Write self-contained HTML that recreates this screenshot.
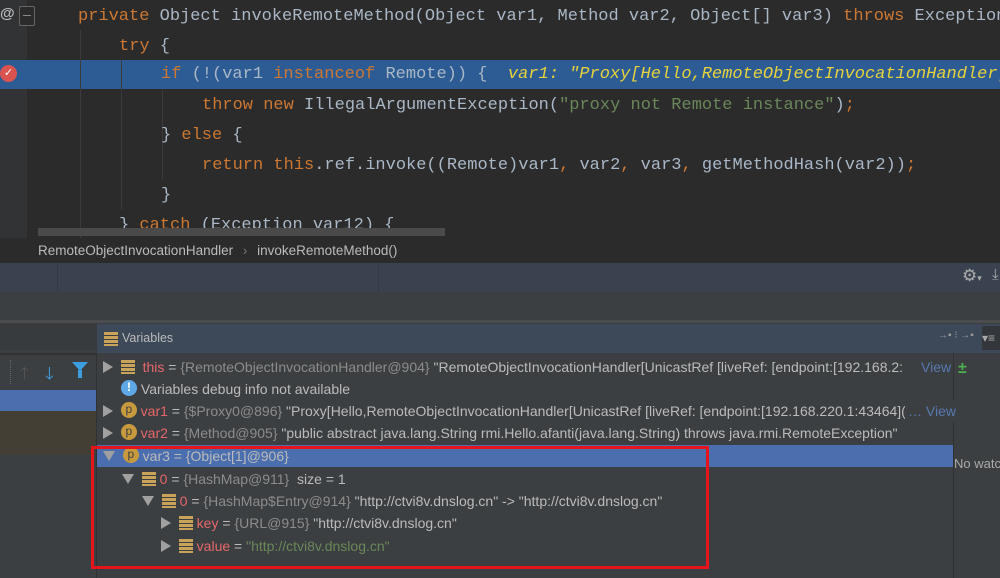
<!DOCTYPE html>
<html><head><meta charset="utf-8"><style>
*{margin:0;padding:0;box-sizing:border-box}
body{width:1000px;height:578px;overflow:hidden;background:#3c3f41;position:relative;font-family:"Liberation Sans",sans-serif}
.abs{position:absolute}
#ed{left:0;top:0;width:1000px;height:238px;background:#2b2b2b}
#gut{left:0;top:0;width:27px;height:238px;background:#313335}
.cl{position:absolute;left:0;height:30px;line-height:30px;font-family:"Liberation Mono",monospace;font-size:17px;color:#a9b7c6;white-space:pre}
.k{color:#cc7832}.s{color:#6a8759}.d{color:#e6d23c;font-style:italic}
.guide{position:absolute;width:1px;background:#3b3b3b}
.vr{position:absolute;left:97px;height:22px;line-height:22px;font-size:14px;color:#bbbbbb;white-space:nowrap}
.n{color:#e5676b}.g{color:#8c8c8c}.st{color:#6a8759}
.tri{display:inline-block;width:0;height:0;border-top:6px solid transparent;border-bottom:6px solid transparent;border-left:10px solid #a0a0a0;vertical-align:-1px}
.trd{display:inline-block;width:0;height:0;border-left:6px solid transparent;border-right:6px solid transparent;border-top:10px solid #a0a0a0;vertical-align:0}
.ic{display:inline-block;width:14px;height:14px;vertical-align:-2px;background:repeating-linear-gradient(#c9a35a 0 3px,#3c3f41 3px 4px)}
.p{display:inline-block;width:16px;height:16px;border-radius:50%;background:#c89a3e;color:#3c3f41;font-size:12px;line-height:15px;text-align:center;vertical-align:middle;position:relative;top:-2px}
</style></head><body>
<div id="ed" class="abs"></div>
<div id="gut" class="abs"></div>
<div class="abs" style="left:0;top:60px;width:1000px;height:29px;background:#2d5c94"></div>
<div class="abs" style="left:0;top:5px;color:#bbb;font-size:15px;font-weight:bold">@</div>
<div class="abs" style="left:19px;top:6px;width:16px;height:20px;border:1px solid #666;border-radius:2px;background:#2b2b2b"></div>
<div class="abs" style="left:23px;top:15px;width:8px;height:1px;background:#888"></div>
<div class="abs" style="left:0;top:65px;width:17px;height:17px;border-radius:50%;background:#d9534f;color:#fff;font-size:11px;line-height:17px;text-align:center">✓</div>
<div class="guide" style="left:80px;top:30px;height:208px"></div>
<div class="guide" style="left:121px;top:60px;height:150px"></div>
<div class="guide" style="left:162px;top:90px;height:90px"></div>
<div class="cl" style="top:2px;left:78px"><span class="k">private</span> Object invokeRemoteMethod(Object var1, Method var2, Object[] var3) <span class="k">throws</span> Exception</div>
<div class="cl" style="top:32px;left:119px"><span class="k">try</span> {</div>
<div class="cl" style="top:60px;left:161px"><span class="k">if</span> (!(var1 <span class="k">instanceof</span> Remote)) {  <span class="d">var1: "Proxy[Hello,RemoteObjectInvocationHandler[</span></div>
<div class="cl" style="top:91px;left:202px"><span class="k">throw new</span> IllegalArgumentException(<span class="s">"proxy not Remote instance"</span>)<span class="k">;</span></div>
<div class="cl" style="top:121px;left:161px">} <span class="k">else</span> {</div>
<div class="cl" style="top:151px;left:202px"><span class="k">return this</span>.ref.invoke((Remote)var1<span class="k">,</span> var2<span class="k">,</span> var3<span class="k">,</span> getMethodHash(var2))<span class="k">;</span></div>
<div class="cl" style="top:181px;left:161px">}</div>
<div class="cl" style="top:211px;left:119px">} <span class="k">catch</span> (Exception var12) {</div>
<div class="abs" style="left:38px;top:228px;width:407px;height:8px;background:#4a4a4a"></div>
<div class="abs" style="left:0;top:238px;width:1000px;height:25px;background:#2b2b2b;color:#bbb;font-size:13.5px;line-height:25px;padding-left:38px">RemoteObjectInvocationHandler <span style="color:#777;margin:0 6px">›</span> invokeRemoteMethod()</div>
<div class="abs" style="left:0;top:263px;width:1000px;height:29px;background:#3a4250"></div>
<div class="abs" style="left:57px;top:263px;width:1px;height:29px;background:#333a44"></div>
<div class="abs" style="left:378px;top:263px;width:1px;height:29px;background:#333a44"></div>
<div class="abs" style="left:962px;top:266px;color:#aaa;font-size:17px">⚙<span style="font-size:9px">▾</span></div>
<div class="abs" style="left:992px;top:266px;color:#aaa;font-size:15px">⤓</div>
<div class="abs" style="left:0;top:320px;width:1000px;height:3px;background:#4a4c4e"></div>
<div class="abs" style="left:0;top:324px;width:97px;height:26px;background:#383b3d"></div>
<div class="abs" style="left:97px;top:324px;width:903px;height:29px;background:#3d4859"></div>
<div class="abs" style="left:104px;top:331px"><span class="ic"></span></div>
<div class="abs" style="left:122px;top:324px;line-height:29px;color:#bbb;font-size:12.5px">Variables</div>
<div class="abs" style="left:938px;top:330px;color:#999;font-size:10px">→▪ ⁝ →▪</div>
<div class="abs" style="left:982px;top:326px;width:18px;height:24px;background:#33363a;color:#aaa;font-size:12px;line-height:24px">▾≡</div>
<div class="abs" style="left:0;top:353px;width:97px;height:2px;background:#333"></div>
<div class="abs" style="left:10px;top:360px;width:1px;height:24px;border-left:1px dotted #666"></div>
<div class="abs" style="left:20px;top:361px;color:#555;font-size:17px">🡑</div>
<div class="abs" style="left:45px;top:361px;color:#3d9ee0;font-size:17px">🡓</div>
<div class="abs" style="left:72px;top:362px;width:0;height:0;border-left:8px solid transparent;border-right:8px solid transparent;border-top:9px solid #3d9ee0"></div>
<div class="abs" style="left:78px;top:370px;width:4px;height:8px;background:#3d9ee0"></div>
<div class="abs" style="left:0;top:390px;width:97px;height:21px;background:#4b6eaf"></div>
<div class="abs" style="left:0;top:411px;width:97px;height:44px;background:#443f34"></div>
<div class="abs" style="left:96px;top:353px;width:1px;height:225px;background:#2f3133"></div>
<div class="abs" style="left:953px;top:353px;width:1px;height:225px;background:#2f3133"></div>
<div class="abs" style="left:97px;top:445px;width:856px;height:22px;background:#4b6eaf"></div>
<div class="abs" style="left:958px;top:360px;color:#4caf50;font-size:16px;font-weight:bold">±</div>
<div class="abs" style="left:954px;top:456px;color:#aaa;font-size:13px;white-space:nowrap">No watc</div>
<div class="vr" style="top:356px;padding-left:6px"><span class="tri"></span>&nbsp;&nbsp;<span class="ic"></span>&nbsp;&nbsp;<span class="n">this</span> = <span class="g">{RemoteObjectInvocationHandler@904}</span> "RemoteObjectInvocationHandler[UnicastRef [liveRef: [endpoint:[192.168.2:</div>
<div class="abs" style="left:918px;top:356px;line-height:22px;font-size:14px;color:#5878b0;background:#3c3f41;padding-left:3px">View</div>
<div class="vr" style="top:378px;padding-left:24px"><span class="p" style="background:#5fa8e8;color:#fff;font-weight:bold">!</span> Variables debug info not available</div>
<div class="vr" style="top:400px;padding-left:6px"><span class="tri"></span>&nbsp;&nbsp;<span class="p">p</span>&nbsp;<span class="n">var1</span> = <span class="g">{$Proxy0@896}</span> "Proxy[Hello,RemoteObjectInvocationHandler[UnicastRef [liveRef: [endpoint:[192.168.220.1:43464](</div>
<div class="abs" style="left:905px;top:400px;line-height:22px;font-size:14px;color:#5878b0;background:#3c3f41;padding-left:3px">… View</div>
<div class="vr" style="top:422px;padding-left:6px"><span class="tri"></span>&nbsp;&nbsp;<span class="p">p</span>&nbsp;<span class="n">var2</span> = <span class="g">{Method@905}</span> "public abstract java.lang.String rmi.Hello.afanti(java.lang.String) throws java.rmi.RemoteException"</div>
<div class="vr" style="top:445px;padding-left:6px"><span class="trd"></span>&nbsp;&nbsp;<span class="p">p</span>&nbsp;var3 = {Object[1]@906}</div>
<div class="vr" style="top:468px;padding-left:25px"><span class="trd"></span>&nbsp;&nbsp;<span class="ic"></span>&nbsp;<span class="n">0</span> = <span class="g">{HashMap@911}</span>&nbsp; size = 1</div>
<div class="vr" style="top:490px;padding-left:45px"><span class="trd"></span>&nbsp;&nbsp;<span class="ic"></span>&nbsp;<span class="n">0</span> = <span class="g">{HashMap$Entry@914}</span> "http://ctvi8v.dnslog.cn" -&gt; "http://ctvi8v.dnslog.cn"</div>
<div class="vr" style="top:512px;padding-left:64px"><span class="tri"></span>&nbsp;&nbsp;<span class="ic"></span>&nbsp;<span class="n">key</span> = <span class="g">{URL@915}</span> "http://ctvi8v.dnslog.cn"</div>
<div class="vr" style="top:535px;padding-left:64px"><span class="tri"></span>&nbsp;&nbsp;<span class="ic"></span>&nbsp;<span class="n">value</span> = <span class="st">"http://ctvi8v.dnslog.cn"</span></div>
<div class="abs" style="left:91px;top:446px;width:618px;height:123px;border:3px solid #e8141b"></div>
</body></html>
